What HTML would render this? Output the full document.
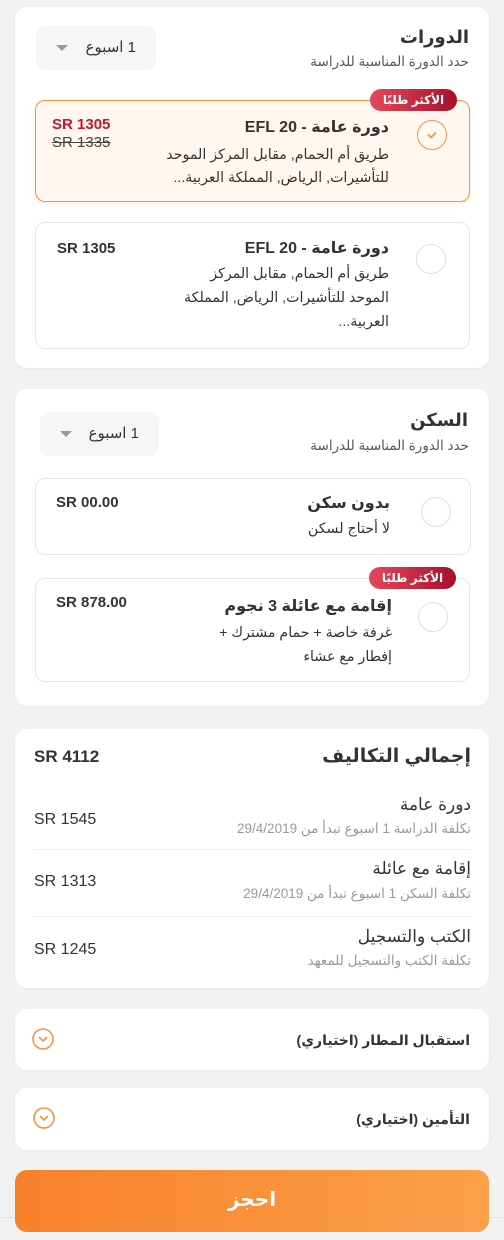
<!DOCTYPE html>
<html><head><meta charset="utf-8"><style>
*{margin:0;padding:0;box-sizing:border-box}
body{width:504px;height:1240px;background:#f2f2f2;font-family:"Liberation Sans","DejaVu Sans",sans-serif;color:#333;position:relative;overflow:hidden}
.card{position:absolute;left:15px;width:474px;background:#fff;border-radius:12px;box-shadow:0 1px 3px rgba(0,0,0,.04)}
.t{position:absolute;white-space:nowrap;line-height:20px}
.r{direction:rtl;text-align:right}
.b{font-weight:bold}
.opt{position:absolute;border:1px solid #e6e6e6;border-radius:10px;background:#fff}
.sel{background:#fff7f0;border:1.5px solid #f7933e;box-shadow:0 2px 6px rgba(247,147,62,.15)}
.circ{position:absolute;width:30px;height:30px;border-radius:50%;border:1.5px solid #ddd;background:#fff}
.badge{position:absolute;height:22px;border-radius:11px;background:linear-gradient(90deg,#e3495c,#a8102a);color:#fff;font-size:12px;font-weight:bold;line-height:22px;text-align:center;direction:rtl}
.dd{position:absolute;background:#f6f6f6;border-radius:10px;height:44px}
.dd span{position:absolute;right:20px;top:12px;font-size:15px;line-height:20px;direction:rtl;white-space:nowrap}
.dd i{position:absolute;left:20px;top:19px;width:0;height:0;border-left:6px solid transparent;border-right:6px solid transparent;border-top:6px solid #999}
.sub{font-size:13.5px;color:#555}
.desc{font-size:14.2px;color:#333;line-height:24px}
.grey{font-size:13.5px;color:#999}
hr{position:absolute;left:34px;width:437px;border:0;border-top:1px solid #eee}
</style></head><body>

<!-- Card 1 -->
<div class="card" style="top:7px;height:361px"></div>
<div class="t r b" style="right:35px;top:25px;font-size:18px;line-height:24px">الدورات</div>
<div class="t r sub" style="right:35px;top:52px">حدد الدورة المناسبة للدراسة</div>
<div class="dd" style="left:36px;top:26px;width:120px"><span>1 اسبوع</span><i></i></div>

<div class="opt sel" style="left:35px;top:100px;width:435px;height:102px"></div>
<div class="badge" style="left:370px;top:89px;width:87px">الأكثر طلبًا</div>
<div class="circ" style="left:417px;top:120px;border-color:#f7933e;background:transparent"></div>
<svg style="position:absolute;left:425px;top:128px" width="14" height="14" viewBox="0 0 14 14"><path d="M3.5 7l2.5 2.5 4.5-4.5" fill="none" stroke="#f7933e" stroke-width="1.8" stroke-linecap="round" stroke-linejoin="round"/></svg>
<div class="t r b" style="right:115px;top:118px;font-size:16px">دورة عامة - EFL 20</div>
<div class="t r desc" style="right:115px;top:143px">طريق أم الحمام, مقابل المركز الموحد</div>
<div class="t r desc" style="right:115px;top:166px">للتأشيرات, الرياض, المملكة العربية...</div>
<div class="t b" style="left:52px;top:115px;font-size:15px;color:#d0112b">SR 1305</div>
<div class="t" style="left:52px;top:133px;font-size:15px;color:#444;text-decoration:line-through">SR 1335</div>

<div class="opt" style="left:35px;top:222px;width:435px;height:127px"></div>
<div class="circ" style="left:416px;top:244px"></div>
<div class="t r b" style="right:115px;top:239px;font-size:16px">دورة عامة - EFL 20</div>
<div class="t r desc" style="right:115px;top:262px">طريق أم الحمام, مقابل المركز</div>
<div class="t r desc" style="right:115px;top:286px">الموحد للتأشيرات, الرياض, المملكة</div>
<div class="t r desc" style="right:115px;top:310px">العربية...</div>
<div class="t b" style="left:57px;top:239px;font-size:15px">SR 1305</div>

<!-- Card 2 -->
<div class="card" style="top:389px;height:317px"></div>
<div class="t r b" style="right:36px;top:408px;font-size:18px;line-height:24px">السكن</div>
<div class="t r sub" style="right:35px;top:436px">حدد الدورة المناسبة للدراسة</div>
<div class="dd" style="left:40px;top:412px;width:119px"><span>1 اسبوع</span><i></i></div>

<div class="opt" style="left:35px;top:478px;width:436px;height:77px"></div>
<div class="circ" style="left:421px;top:497px"></div>
<div class="t r b" style="right:114px;top:494px;font-size:16px">بدون سكن</div>
<div class="t r desc" style="right:114px;top:517px">لا أحتاج لسكن</div>
<div class="t b" style="left:56px;top:493px;font-size:15px">SR 00.00</div>

<div class="opt" style="left:35px;top:578px;width:435px;height:104px"></div>
<div class="badge" style="left:369px;top:567px;width:87px">الأكثر طلبًا</div>
<div class="circ" style="left:418px;top:602px"></div>
<div class="t r b" style="right:112px;top:597px;font-size:16px">إقامة مع عائلة 3 نجوم</div>
<div class="t r desc" style="right:112px;top:621px">غرفة خاصة + حمام مشترك +</div>
<div class="t r desc" style="right:112px;top:645px">إفطار مع عشاء</div>
<div class="t b" style="left:56px;top:593px;font-size:15px">SR 878.00</div>

<!-- Card 3 -->
<div class="card" style="top:729px;height:259px"></div>
<div class="t r b" style="right:33px;top:745px;font-size:19px;line-height:24px">إجمالي التكاليف</div>
<div class="t b" style="left:34px;top:746px;font-size:17px;line-height:22px">SR 4112</div>

<div class="t r" style="right:33px;top:795px;font-size:17px">دورة عامة</div>
<div class="t r grey" style="right:33px;top:819px">تكلفة الدراسة 1 اسبوع تبدأ من 29/4/2019</div>
<div class="t" style="left:34px;top:810px;font-size:16px">SR 1545</div>
<hr style="top:849px">
<div class="t r" style="right:33px;top:859px;font-size:17px">إقامة مع عائلة</div>
<div class="t r grey" style="right:33px;top:884px">تكلفة السكن 1 اسبوع تبدأ من 29/4/2019</div>
<div class="t" style="left:34px;top:872px;font-size:16px">SR 1313</div>
<hr style="top:916px">
<div class="t r" style="right:33px;top:927px;font-size:17px">الكتب والتسجيل</div>
<div class="t r grey" style="right:33px;top:951px">تكلفة الكتب والتسجيل للمعهد</div>
<div class="t" style="left:34px;top:940px;font-size:16px">SR 1245</div>

<!-- Card 4 -->
<div class="card" style="top:1009px;height:61px"></div>
<div class="t r b" style="right:34px;top:1030px;font-size:14px">استقبال المطار (اختياري)</div>
<svg style="position:absolute;left:32px;top:1028px" width="22" height="22" viewBox="0 0 22 22"><circle cx="11" cy="11" r="10" fill="none" stroke="#f7933e" stroke-width="1.6"/><path d="M7.5 9.5l3.5 3.5 3.5-3.5" fill="none" stroke="#f7933e" stroke-width="1.6" stroke-linecap="round" stroke-linejoin="round"/></svg>

<!-- Card 5 -->
<div class="card" style="top:1088px;height:62px"></div>
<div class="t r b" style="right:34px;top:1109px;font-size:14px">التأمين (اختياري)</div>
<svg style="position:absolute;left:33px;top:1107px" width="22" height="22" viewBox="0 0 22 22"><circle cx="11" cy="11" r="10" fill="none" stroke="#f7933e" stroke-width="1.6"/><path d="M7.5 9.5l3.5 3.5 3.5-3.5" fill="none" stroke="#f7933e" stroke-width="1.6" stroke-linecap="round" stroke-linejoin="round"/></svg>

<!-- Button -->
<div style="position:absolute;left:0;top:1217px;width:504px;height:1px;background:#e4e4e4"></div>
<div style="position:absolute;left:15px;top:1170px;width:474px;height:62px;border-radius:12px;background:linear-gradient(90deg,#f7812a,#fca04a);color:#fff;font-size:20px;font-weight:bold;text-align:center;line-height:60px;direction:rtl">احجز</div>
</body></html>
